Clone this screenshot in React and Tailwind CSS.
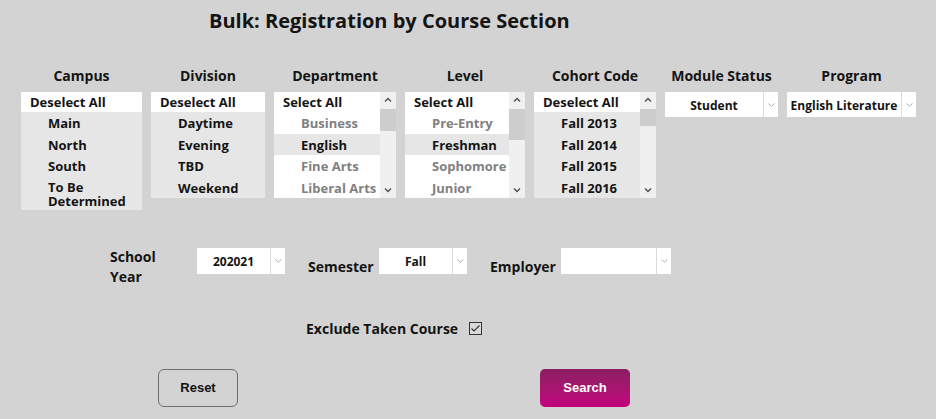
import React, { useState } from 'react';

const font = { fontFamily: '"Open Sans", Lato, sans-serif' };

const ScrollBar = ({ thumbTop, thumbHeight }) => (
    <div className="relative w-[16px] h-full bg-[#f0f0f0] shrink-0">
        <svg className="absolute left-[4px] top-[5px]" width="8" height="6" viewBox="0 0 8 6">
            <polyline points="1,4.5 4,1.5 7,4.5" fill="none" stroke="#505050" strokeWidth="1.4" />
        </svg>
        <div className="absolute left-0 w-[16px] bg-[#cdcdcd]" style={{ top: thumbTop, height: thumbHeight }} />
        <svg className="absolute left-[4px] bottom-[5px]" width="8" height="6" viewBox="0 0 8 6">
            <polyline points="1,1.5 4,4.5 7,1.5" fill="none" stroke="#505050" strokeWidth="1.4" />
        </svg>
    </div>
);

const ListBox = ({ width, head, items, scroll, height }) => (
    <div className="flex bg-white overflow-hidden" style={{ width, height }}>
        <div className="flex-1 flex flex-col">
            <div className="h-[20px] shrink-0 flex items-center pl-[9px] pt-[2px] bg-white text-[13px] font-bold text-[#141414]">
                {head}
            </div>
            {items.map((it, i) => (
                <div
                    key={i}
                    className={`shrink-0 flex items-center pl-[27px] text-[13px] font-bold ${it.on ? 'bg-[#e6e6e6] text-[#141414]' : 'bg-white text-[#808080]'} ${it.tall ? 'h-[33.5px] pt-[1px] leading-[14px]' : 'h-[21.5px] pt-[2px] leading-[13px]'}`}
                >
                    {it.label}
                </div>
            ))}
        </div>
        {scroll && <ScrollBar thumbTop={scroll.top} thumbHeight={scroll.height} />}
    </div>
);

const Select = ({ width, value, height = 25 }) => (
    <div className="flex bg-white shrink-0" style={{ width, height }}>
        <div className="flex-1 flex items-center justify-center pt-[2px] text-[12px] font-bold text-[#141414] whitespace-nowrap overflow-hidden">
            {value}
        </div>
        <div className="w-[15px] border-l border-[#dcdcdc] flex items-center justify-center">
            <svg width="7" height="4" viewBox="0 0 7 4">
                <polyline points="0.5,0.5 3.5,3.2 6.5,0.5" fill="none" stroke="#b0b0b0" strokeWidth="1" />
            </svg>
        </div>
    </div>
);

const Column = ({ label, width, children }) => (
    <div className="flex flex-col shrink-0" style={{ width }}>
        <div className="h-[20px] leading-[20px] text-center text-[14px] font-bold text-[#141414] whitespace-nowrap">{label}</div>
        <div className="mt-[6px]">{children}</div>
    </div>
);

const App = () => {
    const [exclude, setExclude] = useState(true);

    return (
        <div className="w-[936px] h-[419px] bg-[#d3d3d3] overflow-hidden" style={font}>
            <h1 className="pt-[7px] pl-[209px] text-[20px] leading-[28px] font-bold text-[#141414] whitespace-nowrap">
                Bulk: Registration by Course Section
            </h1>

            <div className="flex items-start gap-[9px] pl-[21px] mt-[31px]">
                <Column label="Campus" width={121}>
                    <ListBox
                        width={121}
                        head="Deselect All"
                        items={[
                            { label: 'Main', on: true },
                            { label: 'North', on: true },
                            { label: 'South', on: true },
                            { label: <span>To Be<br />Determined</span>, on: true, tall: true },
                        ]}
                    />
                </Column>
                <Column label="Division" width={114}>
                    <ListBox
                        width={114}
                        head="Deselect All"
                        items={[
                            { label: 'Daytime', on: true },
                            { label: 'Evening', on: true },
                            { label: 'TBD', on: true },
                            { label: 'Weekend', on: true },
                        ]}
                    />
                </Column>
                <Column label="Department" width={122}>
                    <ListBox
                        width={122}
                        height={106}
                        head="Select All"
                        scroll={{ top: 17, height: 22 }}
                        items={[
                            { label: 'Business' },
                            { label: 'English', on: true },
                            { label: 'Fine Arts' },
                            { label: 'Liberal Arts' },
                        ]}
                    />
                </Column>
                <Column label="Level" width={120}>
                    <ListBox
                        width={120}
                        height={106}
                        head="Select All"
                        scroll={{ top: 17, height: 31 }}
                        items={[
                            { label: 'Pre-Entry' },
                            { label: 'Freshman', on: true },
                            { label: 'Sophomore' },
                            { label: 'Junior' },
                        ]}
                    />
                </Column>
                <Column label="Cohort Code" width={122}>
                    <ListBox
                        width={122}
                        height={106}
                        head="Deselect All"
                        scroll={{ top: 17, height: 17 }}
                        items={[
                            { label: 'Fall 2013', on: true },
                            { label: 'Fall 2014', on: true },
                            { label: 'Fall 2015', on: true },
                            { label: 'Fall 2016', on: true },
                        ]}
                    />
                </Column>
                <Column label="Module Status" width={113}>
                    <Select width={113} value="Student" />
                </Column>
                <Column label="Program" width={129}>
                    <Select width={129} value="English Literature" />
                </Column>
            </div>

            <div className="flex items-start pl-[110px] mt-[37px] text-[14px] font-bold text-[#141414]">
                <div className="w-[87px] leading-[20px]">School<br />Year</div>
                <div className="mt-[1px]"><Select width={88} height={26} value="202021" /></div>
                <div className="ml-[23px] mt-[10px] w-[71px] leading-[20px]">Semester</div>
                <div className="mt-[1px]"><Select width={88} height={26} value="Fall" /></div>
                <div className="ml-[23px] mt-[10px] w-[71px] leading-[20px]">Employer</div>
                <div className="mt-[1px]"><Select width={110} height={26} value="" /></div>
            </div>

            <label className="flex items-center pl-[306px] mt-[31px] h-[20px] text-[14px] font-bold text-[#141414] cursor-pointer">
                <span>Exclude Taken Course</span>
                <span
                    className="ml-[11px] w-[13px] h-[13px] border border-[#333] bg-[#dadada] flex items-center justify-center"
                    onClick={() => setExclude(!exclude)}
                >
                    {exclude && (
                        <svg width="11" height="11" viewBox="0 0 11 11">
                            <polyline points="1.5,5.5 4,8 9.5,2.5" fill="none" stroke="#333" strokeWidth="1.1" />
                        </svg>
                    )}
                </span>
            </label>

            <div className="flex items-start pl-[158px] mt-[31px]" style={{ fontFamily: '"Liberation Sans", Arial, sans-serif' }}>
                <button className="w-[80px] h-[38px] rounded-[6px] border border-[#6e6e6e] text-[13px] font-bold text-[#111]">
                    Reset
                </button>
                <button className="ml-[302px] w-[90px] h-[38px] rounded-[5px] bg-gradient-to-b from-[#8a1d62] to-[#c4007e] text-[13px] font-bold text-white">
                    Search
                </button>
            </div>
        </div>
    );
};

export default App;
